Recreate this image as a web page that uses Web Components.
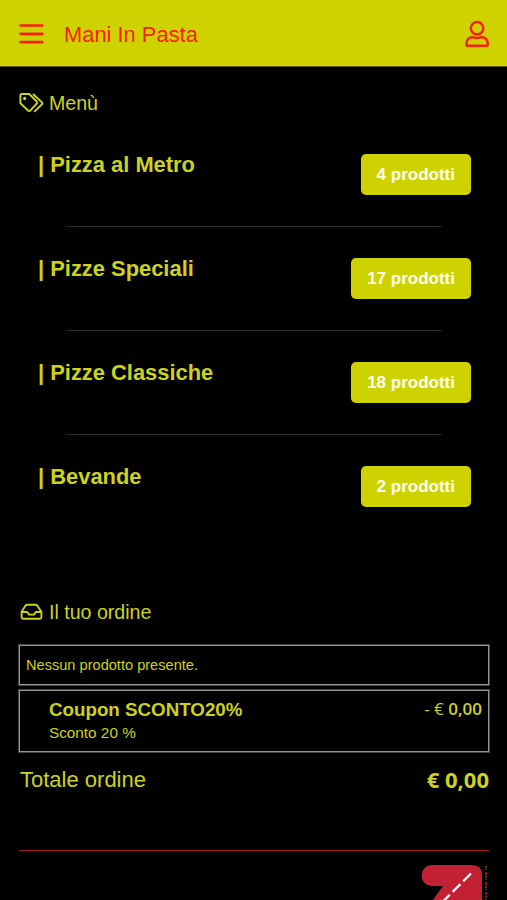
<!DOCTYPE html>
<html lang="it">
<head>
<meta charset="utf-8">
<title>Mani In Pasta</title>
<style>
    body {
        --lime: #cdd200;
        --testo: #ccd31b;
        --rosso: #fa1e05;
        margin: 0;
        height: 900px;
        overflow: hidden;
        background: #000;
        color: var(--testo);
        font-family: "Liberation Sans", Arial, sans-serif;
    }
    main {
        padding: 0 18px 0 19px;
    }
</style>
</head>
<body>
<barra-app>Mani In Pasta</barra-app>
<main>
    <titulo-seccion icono="tags">Menù</titulo-seccion>
    <lista-menu>
        <voce-menu prodotti="4 prodotti">Pizza al Metro</voce-menu>
        <voce-menu prodotti="17 prodotti">Pizze Speciali</voce-menu>
        <voce-menu prodotti="18 prodotti">Pizze Classiche</voce-menu>
        <voce-menu prodotti="2 prodotti">Bevande</voce-menu>
    </lista-menu>
    <titulo-seccion icono="inbox">Il tuo ordine</titulo-seccion>
    <riepilogo-ordine totale="€ 0,00">
        <span slot="vuoto">Nessun prodotto presente.</span>
        <span slot="coupon">Coupon SCONTO20%</span>
        <span slot="sconto">Sconto 20 %</span>
    </riepilogo-ordine>
    <pie-pagina></pie-pagina>
</main>

<script>
class ComponenteBase extends HTMLElement {
    constructor() {
        super();
        this._root = this.attachShadow({ mode: 'open' });
    }
    connectedCallback() {
        this._root.innerHTML = this._html();
    }
}

class BarraApp extends ComponenteBase {
    _html() {
        return `
        <style>
        :host {
            display: flex;
            align-items: center;
            height: 67px;
            box-sizing: border-box;
            padding: 1px 17px 0 19px;
            background: var(--lime);
            border-bottom: 1px solid #5c5e08;
            color: var(--rosso);
            font-size: 21.9px;
        }
        svg {
            display: block;
            fill: none;
            stroke: currentColor;
        }
        h1 {
            flex: 1;
            margin: 0 0 0 20px;
            font: inherit;
            line-height: 26px;
            padding-top: 3px;
        }
        </style>
        <svg width="25" height="22" viewBox="0 0 25 22" stroke-width="2.7" stroke-linecap="round">
            <path d="M1.700 2.500h21.600M1.700 10.800h21.600M1.700 19.200h21.600"/>
        </svg>
        <h1><slot></slot></h1>
        <svg width="26" height="30" viewBox="0 0 26 30" stroke-width="2.5">
            <circle cx="13.100" cy="9.300" r="6.200"/>
            <path d="M8.500 18.200c1.700 0 2.600.8 4.600.8s2.900-.8 4.600-.8c3.400 0 6 2.700 6 6v1.200a1.400 1.400 0 0 1-1.400 1.400H3.900a1.400 1.400 0 0 1-1.400-1.400v-1.200c0-3.300 2.600-6 6-6z"/>
        </svg>
        `
    }
}
customElements.define('barra-app', BarraApp);

class TituloSeccion extends ComponenteBase {
    static get iconos() {
        return {
            'tags': `
                <path d="M2.800 1H10.200L17.800 8.600a1.300 1.300 0 0 1 0 1.900L11.200 17.700a1.300 1.300 0 0 1-1.900 0L1.400 10.200V2.200A1.200 1.200 0 0 1 2.800 1z"/>
                <path d="M14 1l9 8.400a1.300 1.300 0 0 1 0 1.900L15.200 18.900"/>
                <circle cx="5.700" cy="5.400" r="1.600" fill="currentColor" stroke="none"/>`,
            'inbox': `
                <path d="M2.600 9.700L6.600 3.500Q7.200 2.700 8.200 2.700H16.600Q17.600 2.700 18.200 3.500L22.400 9.700V15.200a1.500 1.500 0 0 1-1.500 1.500h-16.800A1.500 1.500 0 0 1 2.600 15.200z"/>
                <path d="M2.900 10H8.200L10 12.600H15L16.800 10H22.100"/>`
        };
    }
    _html() {
        return `
        <style>
        :host {
            display: flex;
            align-items: center;
            height: 24px;
            padding-top: 24px;
            font-size: 19.6px;
        }
        svg {
            display: block;
            margin-right: 5px;
            fill: none;
            stroke: currentColor;
            stroke-width: 1.9;
            stroke-linejoin: round;
        }
        h2 {
            margin: 1px 0 0;
            font: inherit;
        }
        </style>
        <svg width="25" height="20" viewBox="0 0 25 20">${TituloSeccion.iconos[this.getAttribute('icono')]}</svg>
        <h2><slot></slot></h2>
        `
    }
}
customElements.define('titulo-seccion', TituloSeccion);

class ListaMenu extends ComponenteBase {
    _html() {
        return `
        <style>
        :host {
            display: block;
            height: 447px;
            padding: 37px 18px 0 19px;
            box-sizing: border-box;
            margin-bottom: 14px;
        }
        ::slotted(:last-child) {
            --linea: transparent;
        }
        </style>
        <slot></slot>
        `
    }
}
customElements.define('lista-menu', ListaMenu);

class VoceMenu extends ComponenteBase {
    _html() {
        return `
        <style>
        :host {
            display: block;
            height: 104px;
        }
        .riga {
            display: flex;
            justify-content: space-between;
            align-items: flex-start;
            height: 74px;
        }
        h3 {
            margin: 0;
            font-size: 21.9px;
            line-height: 26px;
        }
        .badge {
            margin-top: 1.5px;
            padding: 0 16px;
            border-radius: 5px;
            background: var(--lime);
            color: #fffff0;
            font-size: 17px;
            font-weight: bold;
            line-height: 41px;
        }
        hr {
            margin: 0 29px 0 28px;
            border: 0;
            border-top: 1px solid var(--linea, #2c2d0a);
        }
        </style>
        <div class="riga">
            <h3>| <slot></slot></h3>
            <span class="badge">${this.getAttribute('prodotti')}</span>
        </div>
        <hr>
        `
    }
}
customElements.define('voce-menu', VoceMenu);

class RiepilogoOrdine extends ComponenteBase {
    _html() {
        const totale = this.getAttribute('totale');
        return `
        <style>
        :host {
            display: block;
            padding-top: 21px;
        }
        .box {
            box-sizing: border-box;
            border: 1.5px solid #969696;
            outline: .5px solid #444;
        }
        .vuoto {
            height: 40px;
            padding: 0 6px;
            font-size: 14.6px;
            line-height: 39px;
        }
        .coupon {
            display: flex;
            justify-content: space-between;
            height: 62px;
            margin-top: 5px;
            padding: 6px 6px 0 29px;
        }
        .nome {
            font-size: 18.75px;
            font-weight: bold;
            line-height: 25px;
        }
        .sconto {
            font-size: 15.3px;
            line-height: 22px;
        }
        .prezzo {
            font: 600 17px/24px "Open Sans", "Noto Sans", sans-serif;
        }
        .prezzo span {
            font-weight: 500;
        }
        .totale {
            display: flex;
            justify-content: space-between;
            padding: 13px 0 0 1px;
            font-size: 22px;
            line-height: 30px;
        }
        .totale b {
            font-family: "Open Sans", "Noto Sans", sans-serif;
            line-height: 28px;
        }
        </style>
        <div class="box vuoto"><slot name="vuoto"></slot></div>
        <div class="box coupon">
            <div>
                <div class="nome"><slot name="coupon"></slot></div>
                <div class="sconto"><slot name="sconto"></slot></div>
            </div>
            <div class="prezzo"><span>- €</span> 0,00</div>
        </div>
        <div class="totale"><span>Totale ordine</span><b>${totale}</b></div>
        `
    }
}
customElements.define('riepilogo-ordine', RiepilogoOrdine);

class PiePagina extends ComponenteBase {
    _html() {
        return `
        <style>
        :host {
            display: flex;
            justify-content: flex-end;
            margin-top: 55px;
            padding-top: 14px;
            border-top: 1px solid #a01a26;
        }
        svg {
            display: block;
        }
        </style>
        <svg width="70" height="70" viewBox="0 0 70 70">
            <path fill="#c22033" d="M13 0H53Q63 0 63 10V66Q42 66 42 55V40L14 68L0 54L24 21H13A10.500 10.500 0 0 1 13 0z"/>
            <path d="M52 8.500L14 46.500" fill="none" stroke="#fff" stroke-width="2.200" stroke-dasharray="11 4"/>
            <path d="M67 1V70" fill="none" stroke="#8c1825" stroke-width="2" stroke-dasharray="2 1 1 2 3 1"/>
        </svg>
        `
    }
}
customElements.define('pie-pagina', PiePagina);
</script>
</body>
</html>
